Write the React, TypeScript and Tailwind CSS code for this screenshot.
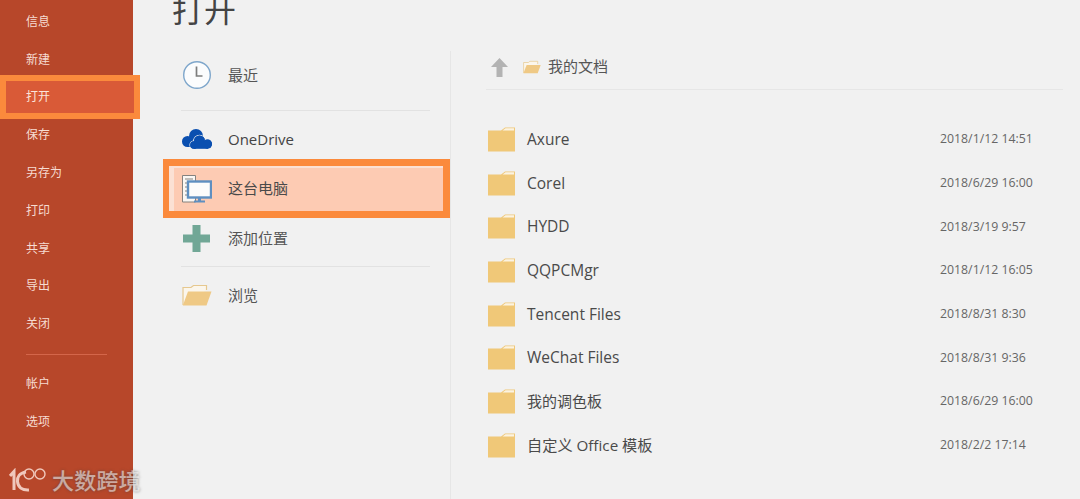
const SANS = "font-['Open_Sans','Noto_Sans_CJK_SC',sans-serif]";

const navTop = ["信息", "新建", "打开", "保存", "另存为", "打印", "共享", "导出", "关闭"];
const navBottom = ["帐户", "选项"];
const files = [
  ["Axure", "2018/1/12 14:51", "text-[15.5px]"],
  ["Corel", "2018/6/29 16:00", "text-[15.5px]"],
  ["HYDD", "2018/3/19 9:57", "text-[15.5px]"],
  ["QQPCMgr", "2018/1/12 16:05", "text-[15.5px]"],
  ["Tencent Files", "2018/8/31 8:30", "text-[15.5px]"],
  ["WeChat Files", "2018/8/31 9:36", "text-[15.5px]"],
  ["我的调色板", "2018/6/29 16:00", "text-[15px]"],
  ["自定义 Office 模板", "2018/2/2 17:14", "text-[15.2px]"],
];

function NavItem({ label }: { label: string }) {
  if (label === "打开") {
    return (
      <div className="relative z-10 -mt-[3.2px] -mb-[3px] flex h-[44px] w-[140px] items-center border-[6px] border-[#fb8a3c] bg-[#d95a37] pl-[20px] text-[12px] text-[#fbe4da]">
        {label}
      </div>
    );
  }
  return <div className="flex h-[37.8px] items-center pl-[26px] text-[12px] text-[#f6dcd2]">{label}</div>;
}

function FolderIcon() {
  return (
    <svg width="27" height="25" viewBox="0 0 27 25" className="shrink-0">
      <path d="M0 3.5H13L17 0.5H27V24.5H0Z" fill="#f0c878" />
      <path d="M14.5 3.5L17.5 1.2H26V3.5Z" fill="#fbf3e2" />
    </svg>
  );
}

function OpenFolder({ w, h }: { w: number; h: number }) {
  return (
    <svg width={w} height={h} viewBox="0 0 30 22" className="shrink-0">
      <path d="M1 21V3.5H9L11.5 1.5H24.5V6" fill="#fbf6ec" stroke="#e6c88f" strokeWidth="1.2" />
      <path d="M6 7.5H29.5L24.5 21.5H0.8Z" fill="#efc985" />
    </svg>
  );
}

function Clock() {
  return (
    <svg width="30" height="30" viewBox="0 0 30 30">
      <circle cx="15" cy="15" r="13.3" fill="#fbfcfd" stroke="#7ea6cb" strokeWidth="1.4" />
      <path d="M14.5 6.5V16H20.5" fill="none" stroke="#7d7d7d" strokeWidth="1.7" />
    </svg>
  );
}

function Cloud() {
  return (
    <svg width="30" height="20" viewBox="0 0 30 20">
      <g fill="#0a4fb0">
        <circle cx="5.5" cy="12.5" r="5.5" />
        <circle cx="14" cy="7" r="7" />
        <rect x="5" y="8" width="12" height="10" />
      </g>
      <g fill="#0a4fb0" stroke="#f1f1f1" strokeWidth="1.6" paintOrder="stroke">
        <circle cx="17.5" cy="12" r="5.5" />
        <circle cx="25.5" cy="15" r="4.5" />
        <circle cx="12" cy="16" r="3.8" />
      </g>
      <g fill="#0a4fb0">
        <circle cx="17.5" cy="12" r="5.5" />
        <circle cx="25.5" cy="15" r="4.5" />
        <circle cx="12" cy="16" r="3.8" />
        <rect x="12" y="13" width="14" height="6.8" />
      </g>
    </svg>
  );
}

function Computer() {
  return (
    <svg width="30" height="28" viewBox="0 0 30 28">
      <path d="M0.5 0.5H13.5V27H0.5Z" fill="#fbf7f3" stroke="#85827f" strokeWidth="1" />
      <path d="M3 4H11M3 8H6M3 12H6M3 16H6M3 20H6" stroke="#85827f" strokeWidth="1" />
      <rect x="6" y="6.5" width="23" height="16" fill="#fdfcfb" stroke="#5f8fc0" strokeWidth="2.4" />
      <path d="M16 22.5H19V25.5H23V27.5H12V25.5H16Z" fill="#5f8fc0" />
    </svg>
  );
}

function Plus() {
  return (
    <svg width="27" height="27" viewBox="0 0 27 27" className="ml-[1px]">
      <path d="M9.5 0H17.5V9.5H27V17.5H17.5V27H9.5V17.5H0V9.5H9.5Z" fill="#71a796" />
    </svg>
  );
}

function UpArrow() {
  return (
    <svg width="17" height="19" viewBox="0 0 17 19">
      <path d="M8.5 0L17 9H11.5V19H5.5V9H0Z" fill="#b3b3b3" />
    </svg>
  );
}

function Place({ icon, label, className = "" }: { icon: React.ReactNode; label: string; className?: string }) {
  return (
    <div className={`flex items-center ${className}`}>
      <div className="flex w-[65px] shrink-0 justify-start pl-[19px]">{icon}</div>
      <span>{label}</span>
    </div>
  );
}

export default function App() {
  return (
    <div className={`${SANS} relative flex h-[499px] w-[1080px] overflow-hidden bg-[#f1f1f1]`}>
      <aside className="flex w-[133px] shrink-0 flex-col bg-[#b7472a] pt-[3px]">
        {navTop.map((n) => (
          <NavItem key={n} label={n} />
        ))}
        <div className="mx-[26px] mt-[11px] mb-[10px] h-px w-[81px] bg-[#d4664a]" />
        {navBottom.map((n) => (
          <NavItem key={n} label={n} />
        ))}
      </aside>

      <main className="flex min-w-0 flex-1 flex-col">
        <h1 className="-mt-[13px] h-[64px] pl-[39px] text-[32px] leading-[46px] font-normal text-[#444444]">打开</h1>
        <div className="flex min-h-0 flex-1">
          <section className="w-[318px] shrink-0 border-r border-[#e6e6e6] pl-[30px] text-[15px] text-[#555555]">
            <Place className="h-[48px]" icon={<Clock />} label="最近" />
            <div className="mt-[11px] ml-[18px] h-px w-[249px] bg-[#e2e2e2]" />
            <Place className="mt-[8px] h-[40px] text-[#444444]" icon={<Cloud />} label="OneDrive" />
            <div className="w-[287px] border-[7px] border-[#fb8a3c] bg-[#fdcbb3]">
              <div className="-ml-px flex h-[45px] items-center border-t-2 border-l-[5px] border-[#fbe1d4]">
                <div className="ml-[8px] flex w-[46px] shrink-0 -translate-y-px">
                  <Computer />
                </div>
                <span className="-translate-y-px text-[#4a4a4a]">这台电脑</span>
              </div>
            </div>
            <Place className="h-[40px]" icon={<Plus />} label="添加位置" />
            <div className="mt-[8px] ml-[18px] h-px w-[249px] bg-[#e2e2e2]" />
            <Place className="mt-[8px] h-[40px]" icon={<OpenFolder w={30} h={22} />} label="浏览" />
          </section>

          <section className="min-w-0 flex-1 pr-[17px] pl-[35px]">
            <div className="flex h-[39px] items-start border-b border-[#e6e6e6] pt-[6px] pl-[5px] text-[15px] text-[#555555]">
              <div className="flex h-[20px] items-center">
                <UpArrow />
                <div className="mr-[7px] ml-[15px]">
                  <OpenFolder w={18} h={14} />
                </div>
                <span className="-translate-y-px">我的文档</span>
              </div>
            </div>
            <div className="mt-[27.6px] flex flex-col pl-[2px]">
              {files.map(([name, date, size]) => (
                <div key={name} className="flex h-[43.7px] items-center">
                  <FolderIcon />
                  <span className={`ml-[12px] text-[#4a4a4a] ${size}`}>{name}</span>
                  <span className="ml-auto w-[123px] text-[12.3px] text-[#666666]">{date}</span>
                </div>
              ))}
            </div>
          </section>
        </div>
      </main>

      <div className="absolute bottom-[7px] left-[9px] flex items-center gap-[5px] text-white/55 [text-shadow:0_0_3px_rgba(60,60,60,0.6)]">
        <svg width="38" height="24" viewBox="0 0 38 24" fill="none" stroke="#f0c8bc" strokeWidth="2">
          <path d="M1 8L5 3.5V22" strokeWidth="3" />
          <path d="M17 4C10.5 5 8 9 8.5 13.5C9 19 13 22.5 20 22" strokeWidth="3" />
          <circle cx="20" cy="6" r="5" strokeWidth="1.4" />
          <circle cx="31" cy="6" r="5" strokeWidth="1.4" />
        </svg>
        <span className="text-[22px] leading-[24px] font-medium tracking-[0.2px]">大数跨境</span>
      </div>
    </div>
  );
}
